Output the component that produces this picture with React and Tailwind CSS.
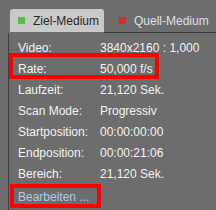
import React from 'react';

const rows = [
  { label: 'Video:', value: '3840x2160 : 1,000' },
  { label: 'Rate:', value: '50,000 f/s' },
  { label: 'Laufzeit:', value: '21,120 Sek.' },
  { label: 'Scan Mode:', value: 'Progressiv' },
  { label: 'Startposition:', value: '00:00:00:00' },
  { label: 'Endposition:', value: '00:00:21:06' },
  { label: 'Bereich:', value: '21,120 Sek.' }
];

const App = () => {
  return (
    <div
      className="relative w-[216px] h-[210px] overflow-hidden bg-[#6d6d6d] text-[12px] leading-none"
      style={{ fontFamily: '"Liberation Sans", Arial, sans-serif' }}
    >
      <div className="flex pt-[9px] pl-[10px]">
        <div className="flex items-center w-[94px] h-[23px] pl-[8px] gap-[8px] bg-[#c9c9c9] rounded-t-[3px] text-[#262626]">
          <span className="w-[7px] h-[7px] bg-[#54c232]" />
          <span>Ziel-Medium</span>
        </div>
        <div className="flex flex-1 items-center h-[24px] pl-[15px] gap-[8px] border-b border-[#3d3d3d] text-[#dde0e6]">
          <span className="w-[7px] h-[7px] bg-[#e4262c]" />
          <span>Quell-Medium</span>
        </div>
      </div>

      <div className="ml-[8px] h-[178px] border-l border-[#3d3d3d] pl-[9px] pt-[4px]">
        {rows.map((row) => (
          <div key={row.label} className="flex items-center h-[21px] text-[#f3f3f3]">
            <span className="w-[82px]">{row.label}</span>
            <span>{row.value}</span>
          </div>
        ))}
        <div className="flex items-center h-[24px] mt-[1px] text-[#b3c7ec]">Bearbeiten ...</div>
      </div>

      <div className="absolute left-[9px] top-[53px] w-[150px] h-[26px] border-[4px] border-[#ff0000]" />
      <div className="absolute left-[10px] top-[184px] w-[91px] h-[24px] border-[4px] border-[#ff0000]" />
    </div>
  );
};

export default App;
